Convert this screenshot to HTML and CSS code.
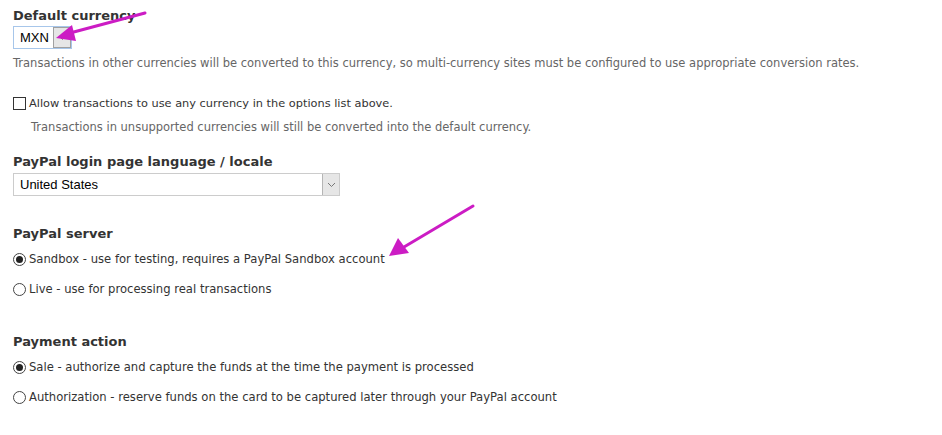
FILE: index.html
```html
<!DOCTYPE html>
<html>
<head>
<meta charset="utf-8">
<link rel="stylesheet" href="styles.css">
</head>
<body>
<form class="form">
  <div class="item item-currency">
    <label class="heading">Default currency</label>
    <div class="select select-small focused">
      <span class="select-value">MXN</span>
      <span class="select-btn"><svg width="9" height="6" viewBox="0 0 9 6"><path d="M1 1 L4.5 4.5 L8 1" fill="none" stroke="#777" stroke-width="1"/></svg></span>
    </div>
    <div class="desc">Transactions in other currencies will be converted to this currency, so multi-currency sites must be configured to use appropriate conversion rates.</div>
  </div>

  <div class="item item-check">
    <div class="option option-check"><span class="checkbox"></span><span class="opt-label">Allow transactions to use any currency in the options list above.</span></div>
    <div class="desc desc-indent">Transactions in unsupported currencies will still be converted into the default currency.</div>
  </div>

  <div class="item item-locale">
    <label class="heading">PayPal login page language / locale</label>
    <div class="select select-wide">
      <span class="select-value">United States</span>
      <span class="select-btn"><svg width="9" height="6" viewBox="0 0 9 6"><path d="M1 1 L4.5 4.5 L8 1" fill="none" stroke="#777" stroke-width="1"/></svg></span>
    </div>
  </div>

  <div class="item item-server">
    <label class="heading">PayPal server</label>
    <div class="radios">
      <div class="option option-radio"><span class="radio checked"></span><span class="opt-label">Sandbox - use for testing, requires a PayPal Sandbox account</span></div>
      <div class="option option-radio"><span class="radio"></span><span class="opt-label">Live - use for processing real transactions</span></div>
    </div>
  </div>

  <div class="item item-action">
    <label class="heading">Payment action</label>
    <div class="radios">
      <div class="option option-radio"><span class="radio checked"></span><span class="opt-label">Sale - authorize and capture the funds at the time the payment is processed</span></div>
      <div class="option option-radio"><span class="radio"></span><span class="opt-label">Authorization - reserve funds on the card to be captured later through your PayPal account</span></div>
    </div>
  </div>
</form>

<svg class="arrow" width="942" height="435" viewBox="0 0 942 435">
  <line x1="145" y1="13" x2="70" y2="33" stroke="#cc1cc4" stroke-width="3" stroke-linecap="round"/>
  <polygon points="56,38 72,25 76,41" fill="#cc1cc4"/>
  <line x1="473" y1="206" x2="404" y2="247" stroke="#cc1cc4" stroke-width="3" stroke-linecap="round"/>
  <polygon points="389,256 398,238 409,253" fill="#cc1cc4"/>
</svg>
</body>
</html>
```

FILE: styles.css
```css
html, body {
  margin: 0;
  padding: 0;
  background: #fff;
}
body {
  font-family: "DejaVu Sans", Verdana, sans-serif;
  font-size: 11.5px;
  color: #333;
  position: relative;
  width: 942px;
  height: 435px;
  overflow: hidden;
}
.form {
  padding: 8px 13px 0 13px;
}
.item {
  display: flex;
  flex-direction: column;
  align-items: flex-start;
}
.heading {
  font-weight: bold;
  font-size: 13px;
  color: #333;
  line-height: 16px;
}
.select {
  display: flex;
  box-sizing: border-box;
  height: 23px;
  border: 1px solid #ccc;
  background: #fff;
  font-family: "Liberation Sans", Arial, sans-serif;
  font-size: 13px;
  color: #000;
}
.select.focused {
  border-color: #a7c6ea;
}
.select-small {
  width: 59px;
  margin-top: 2px;
}
.select-wide {
  width: 327px;
  height: 23px;
  margin-top: 3px;
}
.select-value {
  flex: 1;
  display: flex;
  align-items: center;
  padding-left: 6px;
}
.select-btn {
  width: 16px;
  background: #e6e6e6;
  border-left: 1px solid #b5b5b5;
  display: flex;
  align-items: center;
  justify-content: center;
}
.focused .select-btn {
  border: 1px solid #a0a0a0;
}
.desc {
  color: #666;
  line-height: 14px;
  margin-top: 7px;
}
.desc-indent {
  margin-left: 18px;
  margin-top: 10px;
}
.item-check {
  margin-top: 26px;
}
.item-locale {
  margin-top: 20px;
}
.item-server {
  margin-top: 30px;
}
.item-action {
  margin-top: 38px;
}
.radios {
  display: flex;
  flex-direction: column;
  gap: 16px;
  margin-top: 10px;
}
.option {
  display: flex;
  align-items: center;
  height: 14px;
  color: #333;
}
.option-check {
  font-size: 11.35px;
}
.option-radio {
  font-size: 11.6px;
}
.opt-label {
  margin-left: 3px;
}
.checkbox {
  box-sizing: border-box;
  width: 13px;
  height: 13px;
  border: 1px solid #333;
  background: #fff;
}
.radio {
  box-sizing: border-box;
  width: 13px;
  height: 13px;
  border: 1px solid #444;
  border-radius: 50%;
  background: #fff;
  display: flex;
  align-items: center;
  justify-content: center;
}
.radio.checked::after {
  content: "";
  width: 7px;
  height: 7px;
  border-radius: 50%;
  background: #222;
}
.arrow {
  position: absolute;
  left: 0;
  top: 0;
  pointer-events: none;
}
```
